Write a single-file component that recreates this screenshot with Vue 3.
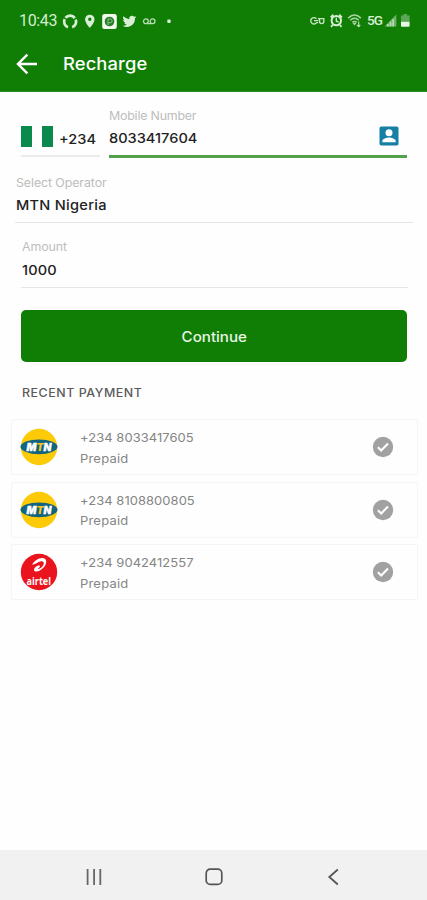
<script setup>
const payments = [
  { id: 1, brand: 'mtn', number: '+234 8033417605', plan: 'Prepaid', cls: 'n1' },
  { id: 2, brand: 'mtn', number: '+234 8108800805', plan: 'Prepaid', cls: 'n2' },
  { id: 3, brand: 'airtel', number: '+234 9042412557', plan: 'Prepaid', cls: 'n3' },
]
</script>

<template>
  <div class="screen">
    <header class="header">
      <div class="status">
        <span class="clock">10:43</span>
        <svg class="status-left" width="112" height="18" viewBox="62 11 112 18" fill="none">
          <path d="M68 26.200A5.800 5.800 0 0 1 64.700 18.200M65.500 16.900A5.800 5.800 0 0 1 74.800 17.100M75.700 18.600A5.800 5.800 0 0 1 72.200 26.200" stroke="#d9efd5" stroke-width="2.700" />
          <path d="M89.800 13.700a4.700 4.700 0 0 0-4.700 4.700c0 3.400 4.700 8.400 4.700 8.400s4.700-5 4.700-8.400a4.700 4.700 0 0 0-4.700-4.700Zm0 2.900a1.700 1.700 0 1 1 0 3.400 1.700 1.700 0 0 1 0-3.400Z" fill="#d9efd5" fill-rule="evenodd" />
          <rect x="102.200" y="13" width="14.600" height="15" rx="2.200" fill="#f2faef" />
          <circle cx="109.500" cy="20.500" r="4.800" fill="#26812b" />
          <path d="M108 24v-6h2.300a1.800 1.800 0 0 1 0 3.700H108" stroke="#8dbd89" stroke-width="1" />
          <g transform="translate(122.800 13.300) scale(.57)">
            <path d="M23.600 4.900a9.600 9.600 0 0 1-2.800.8 4.900 4.900 0 0 0 2.100-2.700c-1 .6-2 1-3.100 1.200a4.900 4.900 0 0 0-8.400 4.500A14 14 0 0 1 1.300 3.600a4.900 4.900 0 0 0 1.500 6.600 4.900 4.900 0 0 1-2.200-.6v.1a4.900 4.900 0 0 0 3.900 4.800 4.900 4.900 0 0 1-2.200.1 4.900 4.900 0 0 0 4.600 3.400A9.900 9.900 0 0 1-.3 20a14 14 0 0 0 21.500-12.500c1-.7 1.800-1.600 2.400-2.600Z" fill="#d9efd5" />
          </g>
          <path d="M145.900 22.700H153M145.900 22.700a2.400 2.400 0 1 1 0-4.800 2.400 2.400 0 0 1 0 4.800ZM152.600 22.700a2.400 2.400 0 1 1 0-4.800 2.400 2.400 0 0 1 0 4.800Z" stroke="#b9dcb5" stroke-width="1.300" />
          <rect x="167.300" y="18.500" width="3.400" height="3.400" rx="1" fill="#d9efd5" />
        </svg>
        <svg class="status-right" width="54" height="18" viewBox="308 11 54 18" fill="none">
          <path d="M316.400 18.700a3.200 3.200 0 1 0 .2 3.900h1.600M314 20.600h4.200M318 18.600h5.800v2.700c0 1.500-.7 2.300-2 2.300s-2.300-.8-2.300-2v-3" stroke="#c5e2c1" stroke-width="1.400" />
          <circle cx="336.300" cy="20.600" r="4.700" stroke="#d9efd5" stroke-width="2" />
          <path d="M336.300 17.700v3.300l2.300 1.200" stroke="#d9efd5" stroke-width="1.300" />
          <path d="M330.700 17.300l2.600-2.700M341.900 17.300l-2.600-2.700M332.600 25l-1.500 1.800M340 25l1.500 1.800" stroke="#d9efd5" stroke-width="1.800" />
          <path d="M348.200 18.100q6.300-6.200 12.600 0M350.300 20.300q4.200-4 8.400 0M352.400 22.400q2.100-1.900 4.200 0" stroke="#acd5a7" stroke-width="1.500" />
          <path d="M354.500 25.400l-2-2.500h4Z" fill="#acd5a7" />
          <path d="M358.700 21.500v5M356.900 24.800l1.800 1.800 1.600-1.600" stroke="#bcdeb8" stroke-width="1.100" />
        </svg>
        <span class="network">5G</span>
        <svg class="status-end" width="28" height="18" viewBox="383 11 28 18">
          <path d="M384.500 26.500 396.300 14.500v12Z" fill="#6fb06d" />
          <path d="M387 24h1.700v2.500H387ZM389.700 21.700h1.700v4.800h-1.700ZM392.300 19h1.600v7.500h-1.600Z" fill="#b8dab4" />
          <path d="M403.500 14h3.500v1.500h2.600v6.300h-8.600v-6.300h2.500Z" fill="#5ca65a" />
          <path d="M401 21.800h8.600v4a1 1 0 0 1-1 1H402a1 1 0 0 1-1-1Z" fill="#e7f5e4" />
        </svg>
      </div>
      <div class="toolbar">
        <svg width="22" height="22" viewBox="0 0 22 22" fill="none" stroke="#fff" stroke-width="2.400"><path d="M21 11H2.200M11.300 1.700 2 11l9.300 9.300" /></svg>
        <h1>Recharge</h1>
      </div>
    </header>

    <main>
      <section class="phone">
        <div class="code">
          <span class="flag"><i></i><i></i></span>
          <span class="prefix">+234</span>
        </div>
        <div class="mobile">
          <div>
            <div class="label mobile-label">Mobile Number</div>
            <div class="value mobile-value">8033417604</div>
          </div>
          <svg width="20" height="20" viewBox="0 0 20 20">
            <rect x=".5" y=".5" width="19" height="19" rx="1.800" fill="#157fa5" />
            <circle cx="10" cy="6.700" r="3.500" fill="#fff" />
            <path d="M3.300 16.300v-1.200c0-2.300 4.400-3.500 6.700-3.500s6.700 1.200 6.700 3.500v1.200Z" fill="#fff" />
          </svg>
        </div>
      </section>

      <section class="operator">
        <div class="label operator-label">Select Operator</div>
        <div class="value operator-value">MTN Nigeria</div>
      </section>

      <section class="amount">
        <div class="label amount-label">Amount</div>
        <div class="value amount-value">1000</div>
      </section>

      <button class="continue"><span>Continue</span></button>
      <h2>RECENT PAYMENT</h2>

      <ul class="payments">
        <li v-for="p in payments" :key="p.id">
          <svg v-if="p.brand === 'mtn'" class="logo" width="38" height="38" viewBox="0 0 38 38">
            <circle cx="19" cy="19" r="18.200" fill="#fdca07" />
            <ellipse cx="19" cy="18.800" rx="18.500" ry="7.400" fill="#12647f" />
            <text x="6.500" y="22.500" class="mtn-text" textLength="25" lengthAdjust="spacingAndGlyphs">M<tspan fill="#f8c51a">T</tspan>N</text>
          </svg>
          <svg v-else class="logo" width="38" height="38" viewBox="0 0 38 38">
            <circle cx="19" cy="19" r="18.200" fill="#e9141d" />
            <path d="M12 11.500C14.500 7.800 18.600 4.900 22.300 5c5 .2 5 5.600 1.300 9.600-2.600 2.800-6.300 4.600-8.300 3.800-2.400-1-1-4.200 1.800-5.500 1.900-.9 3.400-.3 2.800.8-.5 1-2.100 1.300-1.700 2.100.7 1 4.800-1.800 5.500-4.700.6-2.600-1.400-3.300-4.200-2.400-2.600.8-4.700 3-7.500 2.800Z" fill="#fff" />
            <text x="6.500" y="31.500" class="airtel-text" textLength="24.500" lengthAdjust="spacingAndGlyphs">airtel</text>
          </svg>
          <div class="details">
            <div class="number" :class="p.cls">{{ p.number }}</div>
            <div class="plan">{{ p.plan }}</div>
          </div>
          <svg class="check" width="22" height="22" viewBox="0 0 22 22" fill="none">
            <circle cx="11" cy="11" r="10.200" fill="#a1a1a1" />
            <path d="m5.900 11.200 3.300 3.300 6.800-7.100" stroke="#fff" stroke-width="2.100" />
          </svg>
        </li>
      </ul>
    </main>

    <nav>
      <svg width="18" height="18" viewBox="0 0 18 18" stroke="#666" stroke-width="1.800"><path d="M2.600 1v16M9.100 1v16M15.300 1v16" /></svg>
      <svg width="18" height="18" viewBox="0 0 18 18" fill="none" stroke="#555" stroke-width="1.700"><rect x="1.200" y="1.200" width="15.600" height="15.200" rx="4" /></svg>
      <svg width="18" height="18" viewBox="0 0 18 18" fill="none" stroke="#555" stroke-width="1.800"><path d="M12.800 1.500 4.300 9l8.500 7.500" /></svg>
    </nav>
  </div>
</template>

<style>
body { margin: 0; background: #fefefe; }
</style>

<style scoped>
* { box-sizing: border-box; }
.screen { width: 427px; height: 900px; display: flex; flex-direction: column; background: #fefefe; font-family: Inter, "Open Sans", sans-serif; color: #222; }
svg { display: block; flex: none; }
.header { height: 92px; background: #107e04; border-bottom: 1px solid #2c8e22; color: #fff; }
.status { height: 41px; display: flex; align-items: center; padding-left: 19px; }
.clock { width: 43px; font: 400 16px/18px Roboto, sans-serif; letter-spacing: -.35px; color: #d4ecd0; }
.status-left { margin-right: 134px; }
.network { width: 21px; padding-left: 5px; font: 500 13.500px/18px Roboto, sans-serif; letter-spacing: -.8px; color: #d9efd5; white-space: nowrap; }
.status-right, .status-end { position: relative; top: -1px; }
.network { position: relative; top: -1px; }
.toolbar { display: flex; align-items: center; height: 45px; padding-left: 16px; }
h1, h2, .label, .value, .number, .plan, .prefix { transform-origin: left center; transform: scaleX(1.08); white-space: nowrap; }
.toolbar h1 { margin: 0 0 0 25px; font-size: 17px; line-height: 24px; font-weight: 500; letter-spacing: .1px; }
main { flex: 1; }
.phone { display: flex; justify-content: space-between; height: 66px; padding: 0 20px 0 21px; }
.code { display: flex; width: 79px; height: 65px; padding-top: 34px; border-bottom: 2px solid #ebebeb; }
.flag { display: flex; justify-content: space-between; flex: none; width: 32px; height: 21px; }
.flag i { width: 11px; background: #0b8a4d; }
.prefix { margin: 4px 0 0 6px; font-size: 13.500px; line-height: 18px; font-weight: 500; letter-spacing: 0; }
.mobile { display: flex; justify-content: space-between; width: 298px; border-bottom: 3px solid #54a04c; padding: 16px 8px 0 0; }
.mobile svg { margin-top: 18px; }
.label { font-size: 11.500px; line-height: 16px; color: #bdbdbd; letter-spacing: -.1px; }
.value { font-size: 13.500px; font-weight: 500; line-height: 20px; }
.mobile-label { letter-spacing: -.2px; }
.mobile-value { margin-top: 4px; letter-spacing: 0; }
.operator { height: 65px; margin: 0 14px 0 15px; padding: 17px 0 0 1px; border-bottom: 1px solid #e6e6e6; }
.operator-value { margin-top: 4px; letter-spacing: .25px; }
.amount { height: 65px; margin: 0 19px 0 21px; padding: 16px 0 0 1px; border-bottom: 1px solid #e6e6e6; }
.amount-value { margin-top: 5px; letter-spacing: .15px; }
.continue { display: flex; align-items: center; justify-content: center; width: 386px; height: 52px; margin: 22px 0 0 21px; padding: 2px 0 0; border: 0; border-radius: 5px; background: #107e04; color: #e9f6e7; font: 500 14px/20px Inter, sans-serif; letter-spacing: 0; }
.continue span { transform: scaleX(1.080); }
h2 { margin: 22px 0 0 22px; width: 120px; font-size: 11.500px; line-height: 18px; font-weight: 500; letter-spacing: .5px; color: #5b5b5b; }
.payments { display: flex; flex-direction: column; gap: 6.500px; list-style: none; margin: 17px 9px 0 11px; padding: 0; }
.payments li { display: flex; align-items: center; height: 56px; padding: 0 23px 0 8px; border: 1px solid #f5f5f5; border-radius: 2px; background: #fefefe; }
.details { width: 200px; margin: 0 auto 0 22px; padding-top: 3px; color: #858585; font-size: 12px; line-height: 20.500px; }
.number { letter-spacing: .05px; }
.plan { letter-spacing: .2px; }
.mtn-text { font: italic 900 10px Inter, sans-serif; fill: #fff; stroke: #fff; stroke-width: .3px; }
.mtn-text tspan { stroke: none; }
.airtel-text { font: 700 11px "Open Sans", sans-serif; fill: #fff; }
nav { display: flex; justify-content: space-between; align-items: center; height: 50px; padding: 3px 84px 0 85px; background: #f1f1f1; }
</style>
